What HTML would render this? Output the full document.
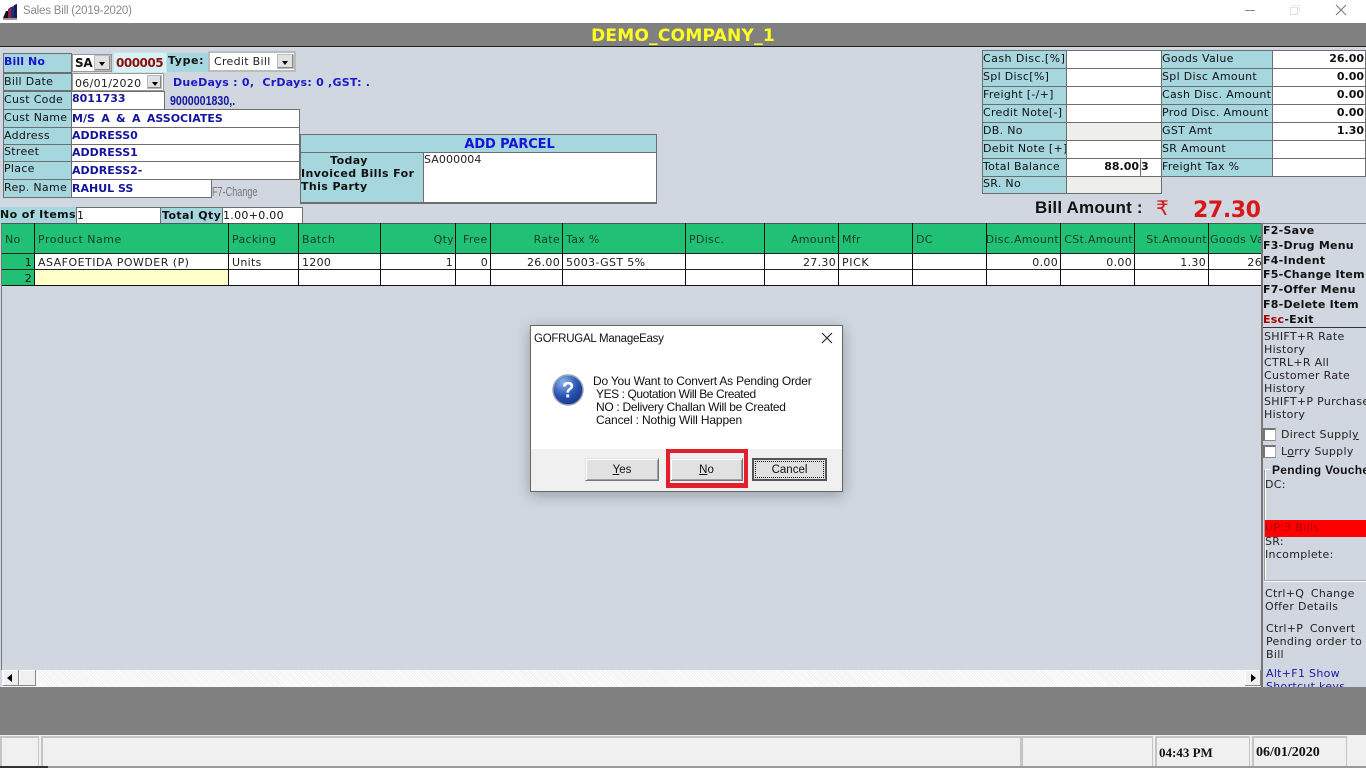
<!DOCTYPE html>
<html><head><meta charset="utf-8"><title>Sales Bill</title>
<style>
html,body{margin:0;padding:0;width:1366px;height:768px;overflow:hidden;background:#d0d7e0}
body{position:relative;font-family:"DejaVu Sans","Liberation Sans",sans-serif;font-size:11px;color:#111;letter-spacing:.3px}
div,span.a{position:absolute;box-sizing:border-box;white-space:nowrap}
.l{background:#a6d6de;border:1px solid #6e6e6e;line-height:15px;padding-left:0}
.v{background:#fff;border:1px solid #6e6e6e;line-height:15px;padding-left:0}
.b{font-weight:bold;letter-spacing:.4px}
.n{font-weight:bold;letter-spacing:0}
.blue{color:#14149c;font-weight:bold;letter-spacing:0}
.r{text-align:right;padding-right:1px}
.g{background:#20c174}
.c{height:1px}
.vl{width:1px;background:#111;top:223px;height:63px}
.h{top:233px;line-height:14px;color:#1b3a2a}
.d{line-height:14px}
.k{left:1263px;font-weight:bold;line-height:14px;color:#111;letter-spacing:.25px}
.s{left:1264px;line-height:13px;color:#222}
.btn{background:#e1e1e1;border:1px solid;border-color:#e4e4e4 #777 #777 #e4e4e4;box-shadow:inset 1px 1px 0 #fff,inset -1px -1px 0 #a0a0a0;font-family:"Liberation Sans",sans-serif;font-size:11.5px;letter-spacing:0;text-align:center;line-height:22px;color:#111}
.sel{width:17px;background:#e1e1e1;border:1px solid #bbb;box-shadow:inset -1px -1px 0 #888}
.sel:after{content:"";position:absolute;left:4px;top:6px;border:3.5px solid transparent;border-top:4px solid #000;border-bottom:0}
.st{top:736px;height:30px;background:#f0f0f0;border:2px solid #c4c4c4;border-bottom:0;border-right-width:1px}
.m{font-family:"Liberation Sans",sans-serif;font-size:12px;line-height:13px;color:#111;left:593px}
</style></head>
<body>
<!-- title bar -->
<div style="left:0;top:0;width:1366px;height:23px;background:#fff"></div>
<svg style="position:absolute;left:2px;top:3px" width="17" height="17" viewBox="0 0 17 17">
<path d="M1 15L4 8l2 0 0 7z" fill="#111"/><path d="M6 15V6l3-2v11z" fill="#9c1c3c"/><path d="M9 15V4l3-1v12z" fill="#1a2c8c"/><path d="M12 15V2l3-1v14z" fill="#161c50"/><path d="M1 16h14" stroke="#333"/>
</svg>
<div style="left:23px;top:4px;font-family:'Liberation Sans',sans-serif;font-size:11.5px;letter-spacing:-.2px;line-height:15px;color:#8a8a8a">Sales Bill (2019-2020)</div>
<div style="left:1245px;top:10px;width:10px;height:1px;background:#888"></div>
<div style="left:1290px;top:7px;width:8px;height:8px;border:1px solid #e2e2e2"></div>
<div style="left:1292px;top:5px;width:8px;height:8px;border:1px solid #e8e8e8;border-left:0;border-bottom:0"></div>
<svg style="position:absolute;left:1335px;top:4px" width="12" height="12"><path d="M1 1l10 10M11 1L1 11" stroke="#777" fill="none"/></svg>

<!-- header -->
<div style="left:0;top:23px;width:1366px;height:24px;background:#808080;border-bottom:1px solid #222"></div>
<div style="left:0;top:24px;width:1366px;text-align:center;font-size:17px;font-weight:bold;line-height:24px;color:#ffff22;letter-spacing:.25px">DEMO_COMPANY_1</div>

<!-- left form -->
<div class="l" style="left:3px;top:53px;width:69px;height:20px;color:#1414c8;font-weight:bold;letter-spacing:.1px">Bill No</div>
<div style="left:72px;top:54px;width:40px;height:18px;background:#fff;border:1px solid #999"></div>
<div class="n" style="left:75px;top:56px;font-size:12px;line-height:15px;letter-spacing:-.3px">SA</div>
<div class="sel" style="left:94px;top:55px;height:16px"></div>
<div style="left:113px;top:52px;width:54px;height:21px;background:#d8f2f6;border:1px solid #c6e6ea;color:#8c1010;font-weight:bold;font-size:12px;letter-spacing:-.5px;line-height:20px;padding-left:2px">000005</div>
<div class="l b" style="left:167px;top:53px;width:42px;height:19px;border:0;padding-left:1px;line-height:16px;letter-spacing:.6px">Type:</div>
<div style="left:208px;top:51px;width:88px;height:21px;background:#fff;border:2px solid #bbb"></div>
<div style="left:214px;top:54px;line-height:15px;color:#222">Credit Bill</div>
<div class="sel" style="left:277px;top:54px;height:15px"></div>

<div class="l" style="left:3px;top:73px;width:69px;height:18px">Bill Date</div>
<div style="left:72px;top:73px;width:92px;height:18px;background:#fff;border:1px solid #999;line-height:19px;padding-left:2px;color:#222">06/01/2020</div>
<div class="sel" style="left:147px;top:75px;height:14px;width:15px"></div>
<div class="blue" style="left:173px;top:75px;line-height:15px;color:#1a1ac8;letter-spacing:.25px">DueDays : 0,&nbsp; CrDays: 0 ,GST: .</div>

<div class="l" style="left:3px;top:91px;width:69px;height:19px">Cust Code</div>
<div class="v blue" style="left:71px;top:91px;width:94px;height:19px;line-height:14px">8011733</div>
<div class="blue" style="left:170px;top:93px;line-height:15px;font-family:'Liberation Sans',sans-serif;font-size:13px;transform:scaleX(.82);transform-origin:0 0;color:#14149c">9000001830,.</div>

<div class="l" style="left:3px;top:109px;width:69px;height:19px">Cust Name</div>
<div class="v blue" style="left:71px;top:109px;width:229px;height:19px;line-height:17px;word-spacing:2.5px">M/S A &amp; A ASSOCIATES</div>
<div class="l" style="left:3px;top:127px;width:69px;height:18px">Address</div>
<div class="v blue" style="left:71px;top:127px;width:229px;height:18px;line-height:16px">ADDRESS0</div>
<div class="l" style="left:3px;top:144px;width:69px;height:18px;line-height:13px">Street</div>
<div class="v blue" style="left:71px;top:144px;width:229px;height:18px">ADDRESS1</div>
<div class="l" style="left:3px;top:161px;width:69px;height:19px;line-height:14px">Place</div>
<div class="v blue" style="left:71px;top:161px;width:229px;height:19px;line-height:17px">ADDRESS2-</div>
<div class="l" style="left:3px;top:179px;width:69px;height:19px">Rep. Name</div>
<div class="v blue" style="left:71px;top:179px;width:141px;height:19px;line-height:17px">RAHUL SS</div>
<div style="left:212px;top:185px;font-family:'Liberation Sans',sans-serif;font-size:13px;letter-spacing:0;line-height:13px;color:#777;transform:scaleX(.7);transform-origin:0 0">F7-Change</div>

<!-- parcel -->
<div class="l" style="left:300px;top:134px;width:357px;height:19px;text-align:center;font-size:13px;font-weight:bold;letter-spacing:-.1px;color:#1414d8;line-height:19px;padding:0 0 0 62px">ADD PARCEL</div>
<div style="left:300px;top:152px;width:357px;height:52px;background:#fff;border:1px solid #6e6e6e;border-width:1px 1px 2px 2px"></div>
<div style="left:301px;top:153px;width:123px;height:49px;background:#a6d6de;border-right:1px solid #6e6e6e"></div>
<div class="b" style="left:301px;top:154px;width:96px;text-align:center;line-height:13px">Today</div>
<div class="b" style="left:301px;top:167px;line-height:13px">Invoiced Bills For</div>
<div class="b" style="left:301px;top:180px;line-height:13px">This Party</div>
<div style="left:424px;top:153px;line-height:14px;color:#222;letter-spacing:.1px">SA000004</div>

<div class="l b" style="left:0;top:207px;width:77px;height:17px;border:0;padding:0">No of Items</div>
<div class="v" style="left:76px;top:207px;width:85px;height:17px;padding:0">1</div>
<div class="l b" style="left:161px;top:207px;width:62px;height:17px;border-width:1px 0 0;padding-left:1px">Total Qty</div>
<div class="v" style="left:222px;top:207px;width:81px;height:17px">1.00+0.00</div>

<!-- top right table -->
<div class="l" style="left:982px;top:50px;width:85px;height:19px;letter-spacing:.45px">Cash Disc.[%]</div><div class="v" style="left:1066px;top:50px;width:96px;height:19px"></div>
<div class="l" style="left:982px;top:68px;width:85px;height:19px">Spl Disc[%]</div><div class="v" style="left:1066px;top:68px;width:96px;height:19px"></div>
<div class="l" style="left:982px;top:86px;width:85px;height:19px">Freight [-/+]</div><div class="v" style="left:1066px;top:86px;width:96px;height:19px"></div>
<div class="l" style="left:982px;top:104px;width:85px;height:19px">Credit Note[-]</div><div class="v" style="left:1066px;top:104px;width:96px;height:19px"></div>
<div class="l" style="left:982px;top:122px;width:85px;height:19px">DB. No</div><div class="v" style="left:1066px;top:122px;width:96px;height:19px;background:#eeeeea"></div>
<div class="l" style="left:982px;top:140px;width:85px;height:19px">Debit Note [+]</div><div class="v" style="left:1066px;top:140px;width:96px;height:19px"></div>
<div class="l" style="left:982px;top:158px;width:85px;height:19px">Total Balance</div><div class="v n r" style="left:1066px;top:158px;width:75px;height:19px">88.00</div><div class="v n" style="left:1140px;top:158px;width:22px;height:19px;padding:0">3</div>
<div class="l" style="left:982px;top:176px;width:85px;height:18px;line-height:13px">SR. No</div><div class="v" style="left:1066px;top:176px;width:96px;height:18px;background:#eeeeea"></div>

<div class="l" style="left:1161px;top:50px;width:112px;height:19px">Goods Value</div><div class="v n r" style="left:1272px;top:50px;width:94px;height:19px">26.00</div>
<div class="l" style="left:1161px;top:68px;width:112px;height:19px">Spl Disc Amount</div><div class="v n r" style="left:1272px;top:68px;width:94px;height:19px">0.00</div>
<div class="l" style="left:1161px;top:86px;width:112px;height:19px">Cash Disc. Amount</div><div class="v n r" style="left:1272px;top:86px;width:94px;height:19px">0.00</div>
<div class="l" style="left:1161px;top:104px;width:112px;height:19px">Prod Disc. Amount</div><div class="v n r" style="left:1272px;top:104px;width:94px;height:19px">0.00</div>
<div class="l" style="left:1161px;top:122px;width:112px;height:19px">GST Amt</div><div class="v n r" style="left:1272px;top:122px;width:94px;height:19px">1.30</div>
<div class="l" style="left:1161px;top:140px;width:112px;height:19px">SR Amount</div><div class="v" style="left:1272px;top:140px;width:94px;height:19px"></div>
<div class="l" style="left:1161px;top:158px;width:112px;height:19px">Freight Tax %</div><div class="v" style="left:1272px;top:158px;width:94px;height:19px"></div>

<div style="left:1035px;top:198px;font-family:'Liberation Sans',sans-serif;font-size:17px;font-weight:bold;line-height:20px;color:#111;letter-spacing:.2px">Bill Amount :</div>
<div style="left:1156px;top:196px;font-family:'DejaVu Sans',sans-serif;font-size:20px;letter-spacing:0;line-height:24px;color:#d81818">₹</div>
<div style="left:1193px;top:197px;font-size:22px;font-weight:bold;line-height:28px;color:#d81818;letter-spacing:-.4px">27.30</div>

<!-- grid -->
<div style="left:1px;top:223px;width:1261px;height:447px;border-left:1px solid #777;border-top:1px solid #555"></div>
<div class="g" style="left:2px;top:224px;width:1260px;height:30px;border-bottom:1px solid #222"></div>
<div style="left:2px;top:254px;width:1260px;height:32px;background:#fff"></div>
<div class="g" style="left:2px;top:254px;width:32px;height:32px"></div>
<div style="left:35px;top:270px;width:193px;height:15px;background:#ffffc8"></div>
<div class="c" style="left:2px;top:269px;width:1260px;background:#222"></div>
<div class="c" style="left:2px;top:285px;width:1260px;background:#111"></div>
<div class="vl" style="left:34px"></div><div class="vl" style="left:228px"></div><div class="vl" style="left:298px"></div><div class="vl" style="left:380px"></div><div class="vl" style="left:455px"></div><div class="vl" style="left:490px"></div><div class="vl" style="left:562px"></div><div class="vl" style="left:685px"></div><div class="vl" style="left:764px"></div><div class="vl" style="left:838px"></div><div class="vl" style="left:912px"></div><div class="vl" style="left:986px"></div><div class="vl" style="left:1060px"></div><div class="vl" style="left:1134px"></div><div class="vl" style="left:1208px"></div>

<div class="h" style="left:5px">No</div>
<div class="h" style="left:38px;letter-spacing:.5px">Product Name</div>
<div class="h" style="left:232px">Packing</div>
<div class="h" style="left:302px">Batch</div>
<div class="h" style="left:380px;width:74px;text-align:right">Qty</div>
<div class="h" style="left:463px">Free</div>
<div class="h" style="left:490px;width:70px;text-align:right">Rate</div>
<div class="h" style="left:566px">Tax %</div>
<div class="h" style="left:689px">PDisc.</div>
<div class="h" style="left:764px;width:72px;text-align:right">Amount</div>
<div class="h" style="left:842px">Mfr</div>
<div class="h" style="left:916px">DC</div>
<div class="h" style="left:987px;width:72px;overflow:hidden;text-align:right;direction:rtl"><span dir="ltr">Disc.Amount</span></div>
<div class="h" style="left:1061px;width:72px;text-align:right;overflow:hidden">CSt.Amount</div>
<div class="h" style="left:1135px;width:72px;text-align:right">St.Amount</div>
<div class="h" style="left:1210px;width:52px;overflow:hidden">Goods Value</div>

<div class="d" style="left:2px;top:256px;width:30px;text-align:right">1</div>
<div class="d" style="left:38px;top:256px;color:#222;letter-spacing:.48px">ASAFOETIDA POWDER (P)</div>
<div class="d" style="left:232px;top:256px;color:#222">Units</div>
<div class="d" style="left:302px;top:256px;color:#222">1200</div>
<div class="d" style="left:380px;top:256px;width:73px;text-align:right;color:#222">1</div>
<div class="d" style="left:455px;top:256px;width:33px;text-align:right;color:#222">0</div>
<div class="d" style="left:490px;top:256px;width:70px;text-align:right;color:#222">26.00</div>
<div class="d" style="left:566px;top:256px;color:#222;letter-spacing:.35px">5003-GST 5%</div>
<div class="d" style="left:764px;top:256px;width:72px;text-align:right;color:#222">27.30</div>
<div class="d" style="left:842px;top:256px;color:#222;letter-spacing:.6px">PICK</div>
<div class="d" style="left:986px;top:256px;width:72px;text-align:right;color:#222">0.00</div>
<div class="d" style="left:1060px;top:256px;width:72px;text-align:right;color:#222">0.00</div>
<div class="d" style="left:1134px;top:256px;width:72px;text-align:right;color:#222">1.30</div>
<div class="d" style="left:1209px;top:256px;width:53px;text-align:right;overflow:hidden;color:#222">26</div>
<div class="d" style="left:2px;top:272px;width:30px;text-align:right">2</div>

<!-- right panel -->
<div style="left:1261px;top:223px;width:2px;height:465px;background:#777"></div>
<div style="left:1263px;top:223px;width:103px;height:1px;background:#777"></div>
<div class="k" style="top:224px">F2-Save</div>
<div class="k" style="top:239px">F3-Drug Menu</div>
<div class="k" style="top:254px">F4-Indent</div>
<div class="k" style="top:268px">F5-Change Item</div>
<div class="k" style="top:283px">F7-Offer Menu</div>
<div class="k" style="top:298px">F8-Delete Item</div>
<div class="k" style="top:313px"><span style="color:#a00">Esc</span>-Exit</div>
<div style="left:1263px;top:327px;width:103px;height:1px;background:#333"></div>
<div class="s" style="top:330px">SHIFT+R Rate</div>
<div class="s" style="top:343px">History</div>
<div class="s" style="top:356px">CTRL+R All</div>
<div class="s" style="top:369px">Customer Rate</div>
<div class="s" style="top:382px">History</div>
<div class="s" style="top:395px">SHIFT+P Purchase</div>
<div class="s" style="top:408px">History</div>
<div style="left:1263px;top:428px;width:13px;height:13px;background:#fff;border:2px solid #777;border-right:1px solid #aaa;border-bottom:1px solid #888"></div>
<div class="s" style="left:1281px;top:428px">Direct Suppl<u>y</u></div>
<div style="left:1263px;top:445px;width:13px;height:13px;background:#fff;border:2px solid #777;border-right:1px solid #aaa;border-bottom:1px solid #888"></div>
<div class="s" style="left:1281px;top:445px">L<u>o</u>rry Supply</div>
<div style="left:1264px;top:469px;width:102px;height:112px;border:1px solid #fff;border-left:1px solid #999;border-bottom:1px solid #aaa;border-right:0;box-shadow:inset 1px 0 0 #fff,0 1px 0 #fff"></div>
<div style="left:1270px;top:462px;width:96px;height:14px;background:#d0d7e0"></div>
<div class="b" style="left:1272px;top:463px;font-family:'Liberation Sans',sans-serif;font-size:12px;line-height:14px;color:#111;letter-spacing:.3px">Pending Voucher</div>
<div class="s" style="left:1265px;top:478px">DC:</div>
<div style="left:1265px;top:520px;width:101px;height:17px;background:#fe0000;color:#b00000;line-height:15px">UP:3 Bills</div>
<div class="s" style="left:1265px;top:535px">SR:</div>
<div class="s" style="left:1265px;top:548px">Incomplete:</div>
<div class="s" style="left:1265px;top:587px;word-spacing:-.5px">Ctrl+Q&nbsp; Change</div>
<div class="s" style="left:1265px;top:600px">Offer Details</div>
<div class="s" style="left:1266px;top:622px;word-spacing:-.5px">Ctrl+P&nbsp; Convert</div>
<div class="s" style="left:1266px;top:635px">Pending order to</div>
<div class="s" style="left:1266px;top:648px">Bill</div>
<div class="s" style="left:1266px;top:667px;color:#1a1aa8">Alt+F1 Show</div>
<div style="left:1266px;top:680px;height:7px;width:90px;overflow:hidden;line-height:13px;color:#1a1aa8">Shortcut keys</div>

<!-- scrollbar -->
<div style="left:2px;top:670px;width:1259px;height:17px;background:#f8f8f8;background-image:repeating-linear-gradient(45deg,#fff 0,#fff 1px,#f0f0f0 1px,#f0f0f0 2px)"></div>
<div style="left:3px;top:670px;width:16px;height:16px;background:#f0f0f0;box-shadow:inset -1px -1px 0 #888,inset 1px 1px 0 #fff"></div>
<div style="left:7px;top:674px;width:0;height:0;border:4px solid transparent;border-right:5px solid #000;border-left:0"></div>
<div style="left:19px;top:670px;width:17px;height:16px;background:#f0f0f0;box-shadow:inset -1px -1px 0 #888,inset 1px 1px 0 #fff"></div>
<div style="left:1245px;top:670px;width:16px;height:16px;background:#f0f0f0;box-shadow:inset -1px -1px 0 #888,inset 1px 1px 0 #fff"></div>
<div style="left:1251px;top:674px;width:0;height:0;border:4px solid transparent;border-left:5px solid #000;border-right:0"></div>

<!-- bottom -->
<div style="left:0;top:687px;width:1366px;height:48px;background:#808080"></div>
<div style="left:0;top:735px;width:1366px;height:33px;background:#f0f0f0"></div>
<div style="left:0;top:766px;width:1366px;height:2px;background:#9a9a9a"></div>
<div style="left:0;top:766px;width:48px;height:2px;background:#333"></div>
<div class="st" style="left:0;width:39px"></div>
<div class="st" style="left:41px;width:980px"></div>
<div class="st" style="left:1021px;width:132px"></div>
<div class="st" style="left:1155px;width:95px;font:bold 13px/30px 'Liberation Serif',serif;letter-spacing:0;padding-left:2px;color:#111">04:43 PM</div>
<div class="st" style="left:1252px;width:95px;font:bold 14px/30px 'Liberation Serif',serif;letter-spacing:0;padding-left:2px;color:#111">06/01/2020</div>

<!-- dialog -->
<div style="left:530px;top:325px;width:313px;height:167px;background:#fff;border:1px solid #666;box-shadow:0 3px 14px rgba(0,0,0,.28)"></div>
<div style="left:534px;top:332px;font-family:'Liberation Sans',sans-serif;font-size:11.5px;line-height:14px;color:#111;letter-spacing:-.25px">GOFRUGAL ManageEasy</div>
<svg style="position:absolute;left:821px;top:332px" width="12" height="12"><path d="M1 1l10 10M11 1L1 11" stroke="#222" stroke-width="1.1" fill="none"/></svg>
<svg style="position:absolute;left:552px;top:374px" width="32" height="32" viewBox="0 0 32 32">
<defs><radialGradient id="q" cx=".35" cy=".25" r=".9"><stop offset="0" stop-color="#8fb4ec"/><stop offset=".5" stop-color="#2a55b4"/><stop offset="1" stop-color="#142c80"/></radialGradient></defs>
<circle cx="16" cy="16" r="15" fill="url(#q)" stroke="#9aa4b4" stroke-width="1.4"/>
<path d="M11 12.5c0-3 2.4-4.7 5.2-4.7 3 0 5 1.7 5 4.2 0 3.4-4.2 3.6-4.2 6.6h-2.6c0-4 4-4.4 4-6.5 0-1-.9-1.7-2.2-1.7-1.4 0-2.3.8-2.4 2.1z" fill="#fff"/>
<rect x="14.3" y="20.4" width="2.9" height="3" fill="#fff"/>
</svg>
<div class="m" style="top:375px;letter-spacing:-.2px">Do You Want to Convert As Pending Order</div>
<div class="m" style="left:596px;top:388px;letter-spacing:-.42px">YES : Quotation Will Be Created</div>
<div class="m" style="left:596px;top:401px;letter-spacing:-.3px">NO : Delivery Challan Will be Created</div>
<div class="m" style="left:596px;top:414px;letter-spacing:-.15px">Cancel : Nothig Will Happen</div>
<div style="left:531px;top:449px;width:311px;height:42px;background:#f0f0f0"></div>
<div class="btn" style="left:585px;top:458px;width:74px;height:23px"><u>Y</u>es</div>
<div class="btn" style="left:670px;top:458px;width:73px;height:23px"><u>N</u>o</div>
<div class="btn" style="left:752px;top:458px;width:75px;height:23px;border:1px solid #555;box-shadow:inset 1px 1px 0 #555,inset -1px -1px 0 #555">Cancel</div>
<div style="left:755px;top:461px;width:69px;height:17px;border:1px dotted #111"></div>
<div style="left:666px;top:449px;width:82px;height:39px;border:4px solid #e2202c;border-top-width:4px;border-bottom-width:5px"></div>
</body></html>
